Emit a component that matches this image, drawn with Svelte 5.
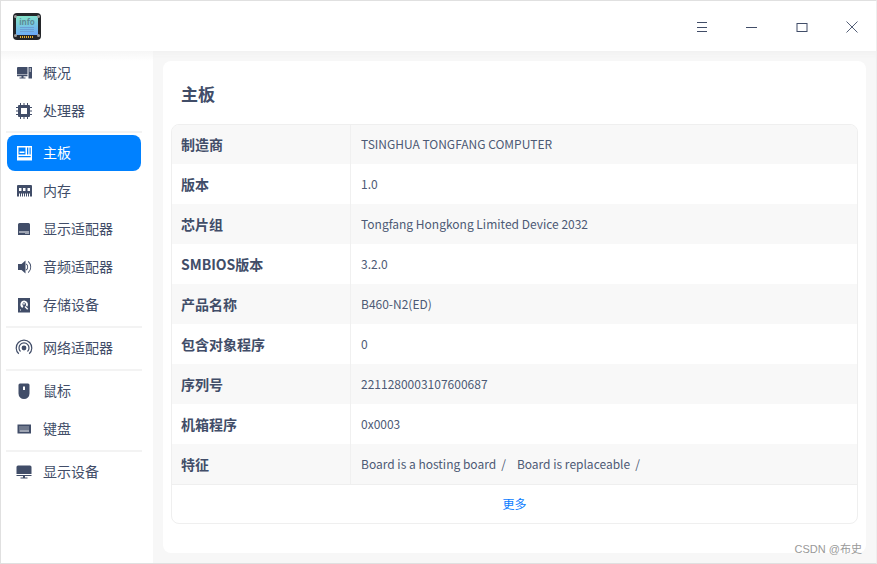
<script lang="ts">
  const groups = [
    [
      { id: 'overview', label: '概况' },
      { id: 'cpu', label: '处理器' }
    ],
    [
      { id: 'board', label: '主板', active: true },
      { id: 'memory', label: '内存' },
      { id: 'gpu', label: '显示适配器' },
      { id: 'audio', label: '音频适配器' },
      { id: 'disk', label: '存储设备' }
    ],
    [{ id: 'network', label: '网络适配器' }],
    [
      { id: 'mouse', label: '鼠标' },
      { id: 'keyboard', label: '键盘' }
    ],
    [{ id: 'display', label: '显示设备' }]
  ];

  const rows = [
    ['制造商', 'TSINGHUA TONGFANG COMPUTER'],
    ['版本', '1.0'],
    ['芯片组', 'Tongfang Hongkong Limited Device 2032'],
    ['SMBIOS版本', '3.2.0'],
    ['产品名称', 'B460-N2(ED)'],
    ['包含对象程序', '0'],
    ['序列号', '2211280003107600687'],
    ['机箱程序', '0x0003']
  ];
</script>

{#snippet icon(id)}
  <svg class="icon" width="18" height="18" viewBox="0 0 18 18" fill="currentColor" aria-hidden="true">
    {#if id === 'overview'}
      <path d="M2 4a1 1 0 0 1 1-1h9.500v7.500H2z" /><path d="M2 11h10.500v1.200H8.500v1.300h2v1h-6v-1h2v-1.300H2z" /><path fill-rule="evenodd" d="M13.500 3h3.500v11.500h-3.500zM14.500 4.500v1h1.500v-1zM14.500 6.500v1h1.500v-1z" />
    {:else if id === 'cpu'}
      <path fill-rule="evenodd" d="M4 3h10a1 1 0 0 1 1 1v10a1 1 0 0 1-1 1H4a1 1 0 0 1-1-1V4a1 1 0 0 1 1-1zm2 3v6h6V6z" />
      <path d="M5 1h1v2H5zM8.500 1h1v2h-1zM12 1h1v2h-1zM5 15h1v2H5zM8.500 15h1v2h-1zM12 15h1v2h-1zM1 5h2v1H1zM1 8.500h2v1H1zM1 12h2v1H1zM15 5h2v1h-2zM15 8.500h2v1h-2zM15 12h2v1h-2z" />
    {:else if id === 'board'}
      <path fill-rule="evenodd" d="M2 2h15v14.500H2zM3.500 3.500v7h7v-7zM4.500 7.500h5v1.500h-5zM12 3.500v7h1.300v-7zM14.500 3.500v7h1.200v-7zM3.500 12v1.300h12.200V12z" />
    {:else if id === 'memory'}
      <path fill-rule="evenodd" d="M3 3h13a1 1 0 0 1 1 1v10.500H2V4a1 1 0 0 1 1-1zM4 6v3h2.500V6zM8 6v3h2.500V6zM12.500 6v3H15V6zM4 11.500v3h1v-3zM6 11.500v3h1v-3zM8 11.500v3h1v-3zM10 11.500v3h1v-3zM12 11.500v3h1v-3zM14 11.500v3h1v-3z" />
    {:else if id === 'gpu'}
      <path fill-rule="evenodd" d="M4.500 3h9A1.500 1.500 0 0 1 15 4.500V15H3V4.500A1.500 1.500 0 0 1 4.500 3zM4 11.500v1h10v-1zM10.500 13h1v1h-1zM12.500 13h1v1h-1z" />
    {:else if id === 'audio'}
      <path d="M3 6h3.500l4-3.500v13l-4-3.500H3z" /><path d="M11.500 5.500a4.500 4.500 0 0 1 0 7l-.6-.7a3.500 3.500 0 0 0 0-5.600z" /><path d="M13.500 3a8 8 0 0 1 0 12l-.6-.7a7 7 0 0 0 0-10.600z" />
    {:else if id === 'disk'}
      <path fill-rule="evenodd" d="M3 2h12v14.500H3zM9.300 4.500a4 4 0 0 0-2 7.400l1.200-2a1.800 1.800 0 1 1 2.200-.6l1.500 1.500a4 4 0 0 0-2.900-6.300zM9 7a.8.8 0 1 0 .01 0zM9.500 11l2.700 2.800 1-1-2.700-2.800zM5 13.500v1h1v-1z" />
    {:else if id === 'network'}
      <circle cx="9" cy="9" r="2.400" />
      <path fill="none" stroke="currentColor" stroke-width="1.200" d="M5.500 12.500a5 5 0 1 1 7 0M3.800 14.700a7.800 7.800 0 1 1 10.400 0" />
    {:else if id === 'mouse'}
      <path fill-rule="evenodd" d="M5 1.500h8a1.500 1.500 0 0 1 1.500 1.500v8.500a5.500 5.500 0 0 1-11 0V3A1.500 1.500 0 0 1 5 1.500zM8 4.500V8h2V4.500z" />
    {:else if id === 'keyboard'}
      <path fill-rule="evenodd" d="M2.500 4.500h13.500v9H2.500zM4.500 6.500v1h1v-1zM6.500 6.500v1h1v-1zM8.500 6.500v1h1v-1zM10.500 6.500v1h1v-1zM12.500 6.500v1h1v-1zM4.500 8.500v1h1v-1zM6.500 8.500v1h1v-1zM8.500 8.500v1h1v-1zM10.500 8.500v1h1v-1zM12.500 8.500v1h1v-1zM4.500 10.500v1h9.500v-1z" />
    {:else if id === 'display'}
      <path d="M3 2.500h12A1.500 1.500 0 0 1 16.500 4v7H1.500V4A1.500 1.500 0 0 1 3 2.500z" /><path d="M1.500 12h15v1H10v1.500h2.500v1h-7v-1H8V13H1.500z" />
    {/if}
  </svg>
{/snippet}

<div class="window">
  <header class="titlebar">
    <div class="logo">
      <i class="dot tl"></i><i class="dot tr"></i><i class="dot bl"></i><i class="dot br"></i>
      <div class="screen">
        <span>info</span>
        <i class="line"></i><i class="line"></i><i class="line"></i>
      </div>
      <div class="pins"></div>
    </div>
    <div class="controls">
      <button class="ctl" aria-label="菜单">
        <svg width="12" height="12" viewBox="0 0 12 12"><path d="M1 1.500h10M1 6.500h10M1 10.500h10" stroke="#414d68" fill="none" /></svg>
      </button>
      <button class="ctl" aria-label="最小化">
        <svg width="12" height="12" viewBox="0 0 12 12"><path d="M0 6.500h11" stroke="#414d68" fill="none" /></svg>
      </button>
      <button class="ctl" aria-label="最大化">
        <svg width="12" height="12" viewBox="0 0 12 12"><rect x="1" y="2.500" width="10" height="8" stroke="#414d68" fill="none" /></svg>
      </button>
      <button class="ctl" aria-label="关闭">
        <svg width="12" height="12" viewBox="0 0 12 12"><path d="M.5.500l11 11M11.500.500l-11 11" stroke="#414d68" fill="none" stroke-width=".9" /></svg>
      </button>
    </div>
  </header>

  <div class="body">
    <nav class="sidebar">
      {#each groups as group, i}
        {#if i > 0}<div class="sep"></div>{/if}
        {#each group as item}
          <div class="item" class:active={item.active}>
            {@render icon(item.id)}
            <span>{item.label}</span>
          </div>
        {/each}
      {/each}
    </nav>

    <main class="content">
      <section class="panel">
        <h1>主板</h1>
        <div class="table">
          {#each rows as [name, value]}
            <div class="row">
              <div class="name">{name}</div>
              <div class="value">{value}</div>
            </div>
          {/each}
          <div class="row last">
            <div class="name">特征</div>
            <div class="value">
              <span>Board is a hosting board</span><span class="slash">/</span><span>Board is replaceable</span><span class="slash">/</span>
            </div>
          </div>
          <div class="more">更多</div>
        </div>
      </section>
    </main>
  </div>
  <div class="watermark">CSDN @布史</div>
</div>

<style>
  :global(*) { box-sizing: border-box; }
  :global(body) { margin: 0; background: #fff; color: #414d68; font-family: "Noto Sans CJK SC", "Noto Sans", sans-serif; }
  .window { position: relative; width: 877px; height: 564px; display: flex; flex-direction: column; border: 1px solid #e0e0e0; border-right-color: #eee; background: #fff; overflow: hidden; }

  .titlebar { flex: none; height: 50px; display: flex; align-items: center; justify-content: space-between; padding-left: 12px; background: #fff; }
  .logo { position: relative; width: 28px; height: 27px; margin-top: 1px; padding: 3px 3px 0; border-radius: 4px; background: #24262a; }
  .dot { position: absolute; width: 3px; height: 3px; border-radius: 50%; background: #9b9b9b; }
  .tl { top: 2px; left: 1px; }
  .tr { top: 2px; right: 1px; }
  .bl { bottom: 3px; left: 1px; }
  .br { bottom: 3px; right: 1px; }
  .screen { display: flex; flex-direction: column; align-items: center; height: 19px; padding-top: 1px; background: linear-gradient(170deg, #86e8c8, #6aa6fb); }
  .screen span { height: 9px; font: 700 8px/9px "Noto Sans", sans-serif; color: #5b8a96; }
  .line { display: block; width: 14px; height: 1px; margin-top: 1px; background: #6c9fd6; }
  .pins { width: 14px; height: 2px; margin: 1px auto 0; background: repeating-linear-gradient(90deg, #e8b030 0 1px, #24262a 1px 2px); }

  .controls { display: flex; height: 50px; margin-right: -1px; }
  .ctl { width: 50px; height: 50px; display: grid; place-items: center; padding: 2px 0 0; border: 0; background: none; }

  .body { flex: 1; display: flex; min-height: 0; }
  .sidebar { flex: none; width: 152px; padding: 3px 0 0 5px; background: linear-gradient(#f6f6f6, #fff 10px); }
  .item { position: relative; display: flex; align-items: center; gap: 10px; width: 136px; height: 38px; padding-left: 9px; font-size: 14px; color: #414d68; }
  .item.active { color: #fff; }
  .item.active::before { content: ""; position: absolute; inset: 1px; border-radius: 8px; background: #0081ff; }
  .item > * { position: relative; }
  .item span { margin-bottom: 2px; }
  .icon { flex: none; }
  .sep { width: 136px; height: 2px; margin: 2px 0 1px; background: #f3f3f3; }
  .item:nth-child(2) + .sep { margin-top: 1px; }

  .content { flex: 1; padding: 10px; background: #f7f7f7; box-shadow: inset 0 8px 8px -8px #ececec; }
  .panel { height: 492px; padding: 0 8px; border-radius: 8px; background: #fff; }
  h1 { height: 63px; margin: 0; padding: 19px 0 0 10px; font-size: 17px; line-height: 28px; font-weight: 700; color: #414d68; }
  .table { height: 400px; border: 1px solid #efefef; border-radius: 8px; overflow: hidden; }
  .row { display: flex; height: 40px; }
  .row:first-child { margin-top: -1px; }
  .row:nth-child(odd) { background: #f8f8f8; }
  .row.last { border-bottom: 1px solid #efefef; height: 41px; }
  .name { flex: none; width: 179px; padding-left: 9px; border-right: 1px solid #f0f0f0; font-size: 14px; font-weight: 700; line-height: 40px; color: #414d68; }
  .value { padding-left: 10px; font-size: 12px; line-height: 40px; color: #4d5a75; }
  .slash { margin: 0 11px 0 5px; }
  .more { height: 37px; text-align: center; font-size: 12px; line-height: 37px; color: #0a7cff; }

  .watermark { position: absolute; right: 14px; bottom: 6px; font: 11px/16px "Liberation Sans", "Noto Sans CJK SC", sans-serif; color: #999; }
</style>
